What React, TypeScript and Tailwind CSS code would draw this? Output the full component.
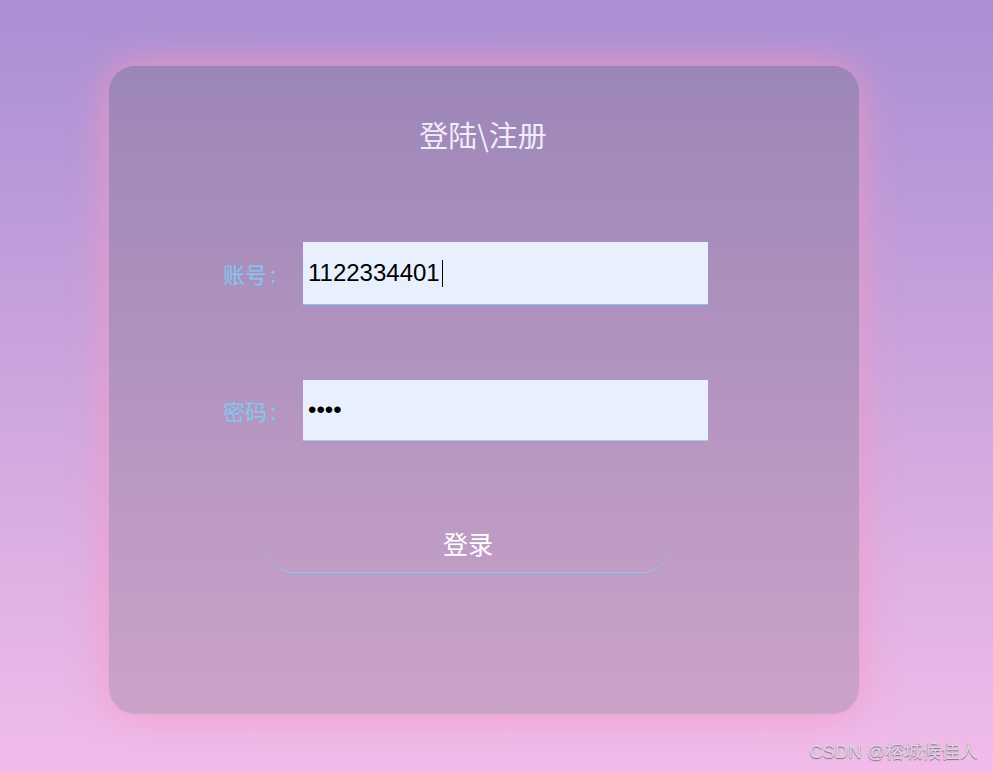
import React from "react";

export default function App() {
  const cjk = "font-['Microsoft_YaHei','Noto_Sans_CJK_SC',sans-serif]";
  return (
    <div className="relative w-[993px] h-[772px] overflow-hidden bg-gradient-to-b from-[#a98fd3] to-[#f2bcea] pt-[66px]">
      <div
        className={`ml-[109px] w-[750px] h-[648px] rounded-[26px] bg-gradient-to-b from-[#9c86b8] to-[#cba3c8] shadow-[0_0_40px_rgba(248,150,192,0.85)] flex flex-col ${cjk}`}
      >
        <div className="mt-[48px] h-[40px] leading-[40px] text-center text-[29px] text-[#f1edf8]">
          <span className="relative left-[-1px]">登陆\注册</span>
        </div>

        <div className="mt-[88px] flex items-center pl-[114px]">
          <div className="w-[80px] text-[22px] text-[#80c9f0]">
            账号<span className="ml-[3px]">:</span>
          </div>
          <div className="w-[405px] h-[63px] bg-[#e8f0fe] border-b border-[#7ecbf0] flex items-center pl-[5px] font-['Liberation_Sans',Arial,sans-serif] text-[24px] text-black">
            <span>1122334401</span>
            <span className="inline-block w-px h-[27px] bg-black ml-[2px]" />
          </div>
        </div>

        <div className="mt-[75px] flex items-center pl-[114px]">
          <div className="w-[80px] text-[22px] text-[#80c9f0]">
            密码<span className="ml-[3px]">:</span>
          </div>
          <div className="w-[405px] h-[61px] bg-[#e8f0fe] border-b border-[#a9c9ea] flex items-center pl-[5px] font-['Liberation_Sans',Arial,sans-serif] text-[24px] text-black">
            <span>••••</span>
          </div>
        </div>

        <div className="mt-[82px] ml-[159px] w-[400px] h-[50px] rounded-[25px] border-b border-[#85cdf0] flex items-center justify-center text-[25px] text-white pb-[8px]">
          登录
        </div>
      </div>

      <div
        className={`absolute right-[15px] bottom-[6px] text-[18.5px] text-[#dcd6df] [text-shadow:0_1px_1px_rgba(0,0,0,0.45)] font-['Liberation_Sans','Noto_Sans_CJK_SC',sans-serif]`}
      >
        CSDN @榕城候佳人
      </div>
    </div>
  );
}
